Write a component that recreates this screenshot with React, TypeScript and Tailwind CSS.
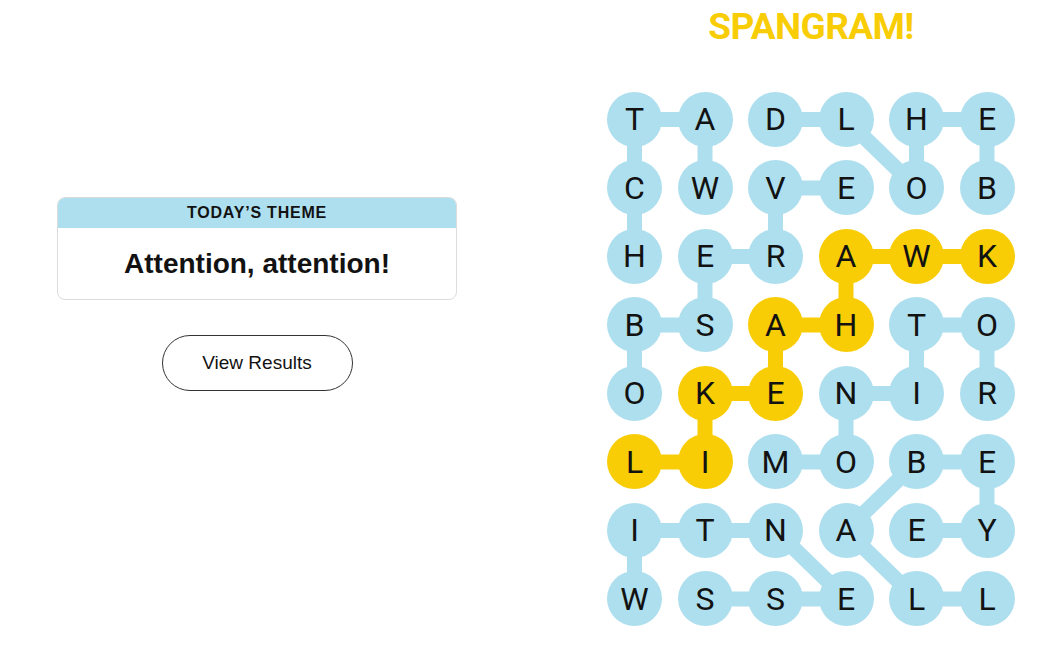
import React from "react";

const BLUE = "#aedfee";
const YELLOW = "#f8cd05";

const letters = [
  "TADLHE",
  "CWVEOB",
  "HERAWK",
  "BSAHTO",
  "OKENIR",
  "LIMOBE",
  "ITNAEY",
  "WSSELL",
];

const yellowCells = new Set([
  "2,3", "2,4", "2,5", "3,2", "3,3", "4,1", "4,2", "5,0", "5,1",
]);

type Link = [number, number, number, number, boolean?];

const links: Link[] = [
  // WATCH
  [1, 1, 0, 1], [0, 1, 0, 0], [0, 0, 1, 0], [1, 0, 2, 0],
  // OBSERVE
  [4, 0, 3, 0], [3, 0, 3, 1], [3, 1, 2, 1], [2, 1, 2, 2], [2, 2, 1, 2], [1, 2, 1, 3],
  // BEHOLD
  [1, 5, 0, 5], [0, 5, 0, 4], [0, 4, 1, 4], [1, 4, 0, 3], [0, 3, 0, 2],
  // MONITOR
  [5, 2, 5, 3], [5, 3, 4, 3], [4, 3, 4, 4], [4, 4, 3, 4], [3, 4, 3, 5], [3, 5, 4, 5],
  // EYEBALL
  [6, 4, 6, 5], [6, 5, 5, 5], [5, 5, 5, 4], [5, 4, 6, 3], [6, 3, 7, 4], [7, 4, 7, 5],
  // WITNESS
  [7, 0, 6, 0], [6, 0, 6, 1], [6, 1, 6, 2], [6, 2, 7, 3], [7, 3, 7, 2], [7, 2, 7, 1],
  // LIKEAHAWK (spangram)
  [5, 0, 5, 1, true], [5, 1, 4, 1, true], [4, 1, 4, 2, true], [4, 2, 3, 2, true],
  [3, 2, 3, 3, true], [3, 3, 2, 3, true], [2, 3, 2, 4, true], [2, 4, 2, 5, true],
];

const cx = (c: number) => 27.5 + c * 70.5;
const cy = (r: number) => 27.5 + r * 68.5;

function Board() {
  return (
    <div className="relative">
      <svg
        className="absolute left-0 top-0"
        width={408}
        height={535}
        viewBox="0 0 408 535"
      >
        {links.map(([r1, c1, r2, c2, y], i) => (
          <line
            key={i}
            x1={cx(c1)}
            y1={cy(r1)}
            x2={cx(c2)}
            y2={cy(r2)}
            stroke={y ? YELLOW : BLUE}
            strokeWidth={15}
          />
        ))}
      </svg>
      <div className="relative grid grid-cols-[repeat(6,55px)] grid-rows-[repeat(8,55px)] gap-x-[15.5px] gap-y-[13.5px]">
        {letters.flatMap((row, r) =>
          row.split("").map((ch, c) => (
            <div
              key={`${r}-${c}`}
              className={`flex h-[55px] w-[55px] items-center justify-center rounded-full text-[32px] leading-none text-[#121212] ${
                yellowCells.has(`${r},${c}`) ? "bg-[#f8cd05]" : "bg-[#aedfee]"
              }`}
              style={{ fontFamily: "Roboto, 'Liberation Sans', sans-serif" }}
            >
              {ch}
            </div>
          ))
        )}
      </div>
    </div>
  );
}

export default function App() {
  return (
    <div
      className="flex h-[669px] w-[1053px] bg-white text-[#121212]"
      style={{ fontFamily: "'Liberation Sans', Arial, sans-serif" }}
    >
      <div className="flex w-[514px] flex-col items-center pt-[197px]">
        <div className="w-[400px] overflow-hidden rounded-[8px] border border-[#dcdcdc]">
          <div className="flex h-[30px] items-center justify-center bg-[#aedfee] text-[16px] font-bold tracking-[0.8px]">
            TODAY’S THEME
          </div>
          <div className="flex h-[71px] items-center justify-center text-[28px] font-bold">
            Attention, attention!
          </div>
        </div>
        <button className="mt-[35px] flex h-[56px] w-[191px] items-center justify-center rounded-full border border-[#333333] bg-white text-[19px]">
          View Results
        </button>
      </div>
      <div className="flex flex-col pl-[93px] pt-[7px]">
        <div
          className="w-[408px] text-center text-[37px] font-bold leading-[40px] tracking-[-0.6px] text-[#f8cd05]"
          style={{ fontFamily: "Roboto, 'Liberation Sans', sans-serif" }}
        >
          SPANGRAM!
        </div>
        <div className="mt-[44.5px]">
          <Board />
        </div>
      </div>
    </div>
  );
}
